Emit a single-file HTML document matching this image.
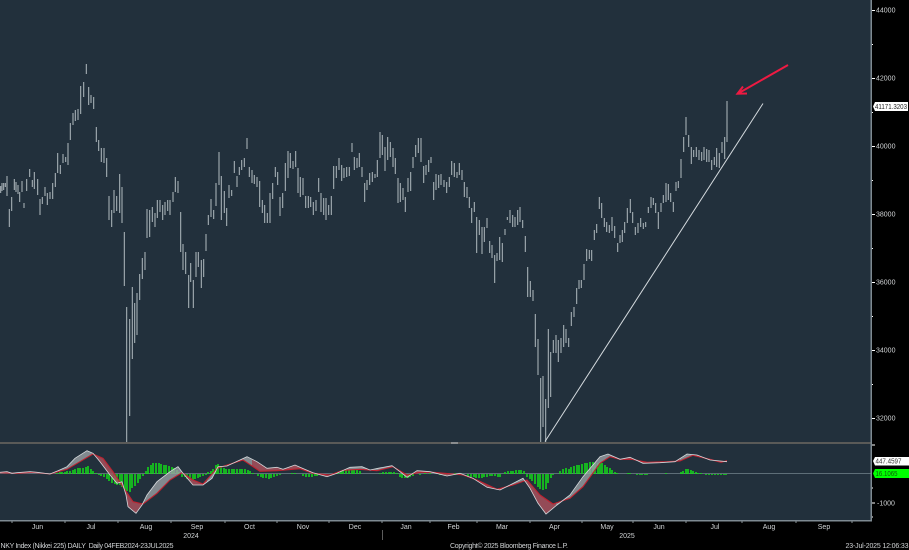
<!DOCTYPE html>
<html><head><meta charset="utf-8"><style>
html,body{margin:0;padding:0;background:#000;width:909px;height:550px;overflow:hidden}
svg{display:block}
text{font-family:"Liberation Sans",sans-serif;font-size:7px;fill:#d0d3d5}
</style></head><body>
<svg width="909" height="550" viewBox="0 0 909 550" xmlns="http://www.w3.org/2000/svg">
<defs>
<clipPath id="g"><path d="M0 440H95V520H0ZM143 440H182V520H143ZM207 440H252V520H207ZM335 440H395V520H335ZM505 440H524V520H505ZM556 440H625V520H556ZM680 440H698V520H680Z"/></clipPath>
<clipPath id="r"><path d="M95 440H143V520H95ZM182 440H207V520H182ZM252 440H335V520H252ZM395 440H505V520H395ZM524 440H556V520H524ZM625 440H680V520H625ZM698 440H730V520H698Z"/></clipPath>
</defs>
<rect width="909" height="550" fill="#000"/>
<rect x="0" y="0" width="871" height="521" fill="#22303c"/>
<!-- price bars -->
<path fill="none" stroke="#b2bbc0" stroke-width="1" d="M0.7 186V193M2 183V191M3.7 183V190M5.3 183V187M7 176V196M9.3 209V227M11.7 197V211M14.3 179V190M16 182V192M18 185V194M19.7 192V202M22 181V192M24 203V208M26.7 179V191M29.7 169V177M32.3 180V187M34.3 172V189M37.7 179V195M40 199V215M42.3 197V204M45 187V196M47.3 193V205M50 192V199M52.7 183V199M55.3 173V187M57.7 153V173M60.3 165V174M63 154V163M65.7 157V162M68 143V165M70.3 123V140M73 113V125M75.3 110V121M78 109V120M80.7 86V114M83.7 82V97M86.3 64V74M88.7 87V105M91 95V103M93.7 97V109M96.3 127V142M98.7 140V151M101.3 148V162M104 148V163M106.7 158V177M109 196V220M111.7 210V227M114 190V213M116.7 196V211M119.7 174V213M122 187V223M124.3 232V286M126.7 307V442M129.7 319V416M132.3 287V359M134.7 303V343M137 293V335M139.7 274V300M142.3 258V279M145 252V270M147 209V238M149.7 210V237M152.3 207V222M155 213V227M157.3 200V218M160 200V212M162.7 205V220M165 202V215M167.7 200V211M170 200V215M173 192V202M175.3 177V192M178 181V193M180.7 212V252M183 244V270M185.7 252V274M188.7 275V308M190.7 263V282M193.3 280V308M196 252V277M198.3 252V267M201.3 260V288M203.7 259V277M206 234V251M208.3 215V225M211 199V217M213.7 210V219M216 183V206M219 152V185M221.3 176V220M224.3 191V213M226.7 208V226M229 185V198M231.7 190V196M234.3 161V173M237 176V187M239.3 167V175M241.7 160V170M244.3 158V167M247 138V149M249.3 167V177M252 170V183M254.3 175V184M257 177V187M259.7 181V207M262.3 200V213M264.7 205V223M267.3 213V223M270 193V223M272.7 183V199M275.3 167V177M277.7 172V185M280 197V216M282.7 193V208M285.3 163V191M288 151V178M290.3 153V168M293 161V169M295.7 151V167M298 168V193M300.3 177V197M303 178V195M305.7 196V208M308.3 196V208M310.7 197V207M313.3 202V215M316 200V211M318.7 178V192M321 193V212M323.7 198V215M326 198V220M328.7 205V215M331.3 196V215M333.7 166V189M336.3 166V178M339 158V170M341.7 165V181M344 168V178M346.7 167V177M349.3 167V176M352 143V152M354.3 157V170M357 158V168M359.3 153V167M362 167V177M364.7 183V202M367 180V190M369.7 173V185M372.3 172V182M375 174V178M377.3 160V177M380 132V158M382.3 135V155M385 147V171M387.7 137V160M390.3 142V157M393 148V167M395.3 158V174M398 178V203M400.3 183V202M403 188V200M405.3 197V212M408 178V192M410.7 172V191M413 157V168M415.7 145V157M418.3 138V153M421 138V162M423.7 166V183M426 165V175M428.7 160V172M431 157V163M433.7 182V200M436 174V190M438.7 175V188M441 174V185M444 180V187M446.7 182V193M449.3 177V187M451.7 161V175M454.3 163V177M457 172V178M459.3 163V175M462 170V180M464.3 182V197M467 187V198M469.3 197V208M471.7 208V223M474.3 202V212M476.7 217V253M479.3 220V235M482 227V254M484.3 227V242M487 218V228M489.7 241V253M492 245V258M494.7 255V283M497 253V261M499.7 237V260M502.3 243V262M505 229V235M507.3 217V220M510 210V223M512.7 215V227M515 217V227M517.7 210V225M520 207V222M522.7 220V228M525.3 236V252M527.7 267V297M530.3 281V297M533 290V301M535.3 314V347M538 339V375M540.7 378V442M543 376V427M545.7 399V442M548.3 329V408M550.7 352V397M553.3 340V353M556 335V353M558.3 340V362M561 338V353M563.7 325V347M566 329V343M568.7 338V347M571.3 312V326M574 307V317M576.7 288V304M579 280V289M581.3 280V288M584 264V280M586.7 249V261M589.3 250V259M591.7 250V261M594.3 230V240M596.7 224V233M599.3 197V209M601.7 203V218M604.3 218V227M606.7 222V232M609.3 225V233M612 217V231M614.7 226V238M617.7 243V252M620 235V243M622.3 230V242M624.7 222V233M627.3 208V223M630.3 199V213M632.7 212V223M635.3 227V235M638 223V233M640.7 218V227M643.3 223V229M645.7 222V227M648.3 207V213M651 197V208M653.3 198V205M655.7 203V213M658.3 212V229M661 203V212M663.3 195V203M666 183V202M668.3 184V200M670.7 193V202M673.3 202V212M676 182V191M678.3 181V188M681 159V178M683.7 137V152M686 117V135M688.7 135V147M691.3 147V164M693.7 150V157M696.3 147V157M699 150V160M701.7 152V161M704 147V160M706.7 149V162M709 150V162M711.7 160V170M714.3 157V165M716.7 148V167M719.3 153V168M722 142V153M724.7 137V159M727 101V142"/>
<!-- trendline -->
<path d="M545 441.5L763 103.5" stroke="#d4dade" stroke-width="1" fill="none"/>
<!-- arrow -->
<path d="M788 65L738 93.5M743 86.5L737.500 93.700L747 93.500" stroke="#ee1a42" stroke-width="2" fill="none"/>
<!-- separator -->
<rect x="0" y="442" width="871" height="2" fill="#5a5a58"/>
<rect x="451" y="442" width="7" height="2" fill="#8a8d8f"/>
<!-- zero line -->
<rect x="0" y="473" width="871" height="1" fill="#5e6e78"/>
<!-- histogram -->
<path stroke="#12df16" stroke-width="1.5" fill="none" d="M57 474V473M60 474V472M62 474V472M65 474V472M67 474V471M70 474V471M73 474V470M75 474V469M78 474V468M80 474V468M83 474V468M86 474V467M88 474V466M91 474V469M93 474V471M96 474V473M99 474V475M101 474V476M104 474V477M107 474V479M109 474V481M112 474V483M115 474V484M117 474V485M120 474V485M122 474V487M125 474V490M127 474V491M130 474V492M132 474V488M135 474V486M138 474V483M140 474V479M143 474V476M146 474V471M148 474V467M151 474V465M153 474V463M156 474V463M159 474V463M161 474V464M164 474V465M166 474V465M169 474V466M172 474V467M174 474V468M177 474V470M179 474V472M182 474V477M185 474V477M187 474V479M190 474V480M193 474V480M195 474V479M198 474V478M200 474V477M203 474V476M206 474V475M208 474V472M211 474V471M213 474V469M216 474V465M218 474V464M221 474V466M224 474V468M226 474V469M229 474V469M232 474V469M234 474V469M237 474V469M240 474V469M242 474V469M245 474V469M248 474V470M250 474V471M253 474V473M258 474V476M261 474V477M263 474V478M266 474V478M269 474V479M271 474V478M274 474V477M277 474V476M280 474V475M292 474V473M295 474V473M303 474V476M306 474V477M309 474V477M312 474V477M315 474V476M317 474V476M335 474V473M338 474V472M341 474V471M343 474V471M346 474V470M349 474V470M352 474V470M354 474V469M357 474V470M360 474V471M380 474V473M383 474V472M386 474V472M389 474V472M391 474V472M394 474V472M397 474V473M400 474V477M402 474V478M405 474V478M408 474V478M410 474V477M413 474V476M420 474V475M425 474V473M430 474V473M440 474V475M445 474V475M455 474V473M460 474V473M468 474V476M471 474V477M474 474V477M476 474V478M479 474V478M482 474V478M484 474V477M487 474V477M490 474V476M492 474V476M495 474V476M498 474V477M500 474V477M505 474V472M508 474V471M511 474V471M513 474V471M516 474V470M519 474V470M521 474V470M524 474V471M527 474V477M530 474V479M532 474V481M535 474V484M538 474V487M540 474V489M543 474V490M546 474V489M548 474V483M551 474V478M553 474V475M560 474V471M563 474V469M566 474V468M569 474V469M571 474V467M574 474V466M577 474V465M579 474V465M582 474V464M585 474V463M587 474V463M590 474V462M593 474V462M595 474V463M598 474V463M600 474V462M602 474V463M605 474V465M607 474V467M610 474V468M612 474V470M615 474V472M617 474V473M628 474V473M630 474V473M637 474V475M640 474V475M642 474V475M645 474V475M647 474V475M666 474V473M681 474V472M683 474V471M686 474V469M688 474V469M691 474V470M693 474V471M696 474V472M698 474V473M701 474V473M706 474V475M709 474V475M712 474V475M715 474V475M718 474V475M721 474V475M724 474V475M726 474V475"/>
<!-- MACD fills -->
<path clip-path="url(#g)" fill="#9aa0a4" fill-opacity=".8" d="M0 472.3L7 471.7L12 473.3L17 472.7L30 471.7L37 472.3L50 474L58 470.7L67 466.7L75 458.3L87 450.7L93 453.3L100 461.7L110 475L117 483.3L122 481.7L126 495L128 506.7L136 513.3L142 505L147 495L157 481.7L170 471.7L178 466.7L183 473.3L193 485L203 485L212 478.3L218 466.7L227 466L247 456.7L257 461.7L267 468.3L277 467.3L283 469.3L295 465L300 467.3L313 472.7L327 476.7L337 473.3L350 467.3L362 466.7L370 470L378 468.3L392 465.7L400 471.7L407 477.3L417 470.7L430 471.7L447 476L460 473.3L473 478.3L487 487.3L500 490L510 485L523 478.3L530 488.3L538 503.3L546 514L557 505L570 495L583 476.7L600 456.7L608 454L620 459.3L630 457.3L643 463.3L660 462.7L675 461.7L687 454L697 455L710 460L727 461.7L727 460.7L721 462.3L710 459.3L693 455.3L680 461L667 461.7L647 462.3L632 459.3L620 459.3L610 456.7L600 463.3L583 486.7L570 498.3L553 504L540 495L527 480L513 485L497 489.3L477 480L463 475L453 474L433 472.3L420 472.3L407 475L393 466.7L377 470.7L360 469.3L343 470.3L330 475L313 473.3L300 468.7L277 470.7L260 471.3L243 460L217 468.3L203 484L193 480L182 472.7L170 480L157 493.3L143 504L133 501.7L123 486.7L113 471.7L103 458.3L93 454L80 461.7L67 469.3L50 474L33 472.3L17 473.3L0 472.7Z"/>
<path clip-path="url(#r)" fill="#a8505c" fill-opacity=".85" d="M0 472.3L7 471.7L12 473.3L17 472.7L30 471.7L37 472.3L50 474L58 470.7L67 466.7L75 458.3L87 450.7L93 453.3L100 461.7L110 475L117 483.3L122 481.7L126 495L128 506.7L136 513.3L142 505L147 495L157 481.7L170 471.7L178 466.7L183 473.3L193 485L203 485L212 478.3L218 466.7L227 466L247 456.7L257 461.7L267 468.3L277 467.3L283 469.3L295 465L300 467.3L313 472.7L327 476.7L337 473.3L350 467.3L362 466.7L370 470L378 468.3L392 465.7L400 471.7L407 477.3L417 470.7L430 471.7L447 476L460 473.3L473 478.3L487 487.3L500 490L510 485L523 478.3L530 488.3L538 503.3L546 514L557 505L570 495L583 476.7L600 456.7L608 454L620 459.3L630 457.3L643 463.3L660 462.7L675 461.7L687 454L697 455L710 460L727 461.7L727 460.7L721 462.3L710 459.3L693 455.3L680 461L667 461.7L647 462.3L632 459.3L620 459.3L610 456.7L600 463.3L583 486.7L570 498.3L553 504L540 495L527 480L513 485L497 489.3L477 480L463 475L453 474L433 472.3L420 472.3L407 475L393 466.7L377 470.7L360 469.3L343 470.3L330 475L313 473.3L300 468.7L277 470.7L260 471.3L243 460L217 468.3L203 484L193 480L182 472.7L170 480L157 493.3L143 504L133 501.7L123 486.7L113 471.7L103 458.3L93 454L80 461.7L67 469.3L50 474L33 472.3L17 473.3L0 472.7Z"/>
<!-- MACD lines -->
<path fill="none" stroke="#c0212f" stroke-width="1.1" d="M0 472.7L17 473.3L33 472.3L50 474L67 469.3L80 461.7L93 454L103 458.3L113 471.7L123 486.7L133 501.7L143 504L157 493.3L170 480L182 472.7L193 480L203 484L217 468.3L243 460L260 471.3L277 470.7L300 468.7L313 473.3L330 475L343 470.3L360 469.3L377 470.7L393 466.7L407 475L420 472.3L433 472.3L453 474L463 475L477 480L497 489.3L513 485L527 480L540 495L553 504L570 498.3L583 486.7L600 463.3L610 456.7L620 459.3L632 459.3L647 462.3L667 461.7L680 461L693 455.3L710 459.3L721 462.3L727 460.7"/>
<path fill="none" stroke="#d5d9dc" stroke-width=".8" d="M0 472.3L7 471.7L12 473.3L17 472.7L30 471.7L37 472.3L50 474L58 470.7L67 466.7L75 458.3L87 450.7L93 453.3L100 461.7L110 475L117 483.3L122 481.7L126 495L128 506.7L136 513.3L142 505L147 495L157 481.7L170 471.7L178 466.7L183 473.3L193 485L203 485L212 478.3L218 466.7L227 466L247 456.7L257 461.7L267 468.3L277 467.3L283 469.3L295 465L300 467.3L313 472.7L327 476.7L337 473.3L350 467.3L362 466.7L370 470L378 468.3L392 465.7L400 471.7L407 477.3L417 470.7L430 471.7L447 476L460 473.3L473 478.3L487 487.3L500 490L510 485L523 478.3L530 488.3L538 503.3L546 514L557 505L570 495L583 476.7L600 456.7L608 454L620 459.3L630 457.3L643 463.3L660 462.7L675 461.7L687 454L697 455L710 460L727 461.7"/>
<!-- frame -->
<rect x="870.5" y="0" width="1.5" height="521" fill="#7e8a92"/>
<rect x="0" y="520" width="872" height="1.5" fill="#7e8a92"/>
<!-- x ticks -->
<path stroke="#8a9298" stroke-width="1" fill="none" d="M12 521V523M65 521V523M118 521V523M171 521V523M225 521V523M277 521V523M329 521V523M382 521V523M430 521V523M477 521V523M530 521V523M582 521V523M633 521V523M686 521V523M742 521V523M796 521V523M852 521V523"/>
<path stroke="#5c5c5c" stroke-width="1" fill="none" d="M382.5 530V540"/>
<!-- y ticks -->
<path stroke="#fff" stroke-width="1" fill="none" d="M872 10.5H875M872 78.5H875M872 146.5H875M872 214.5H875M872 282.5H875M872 350.5H875M872 418.5H875M872 44.5H873M872 112.5H873M872 180.5H873M872 248.5H873M872 316.5H873M872 384.5H873M872 445H875M872 488H873M872 503H875M872 517H873"/>
<text x="876" y="12.5">44000</text>
<text x="876" y="80.5">42000</text>
<text x="876" y="148.5">40000</text>
<text x="876" y="216.5">38000</text>
<text x="876" y="284.5">36000</text>
<text x="876" y="352.5">34000</text>
<text x="876" y="420.5">32000</text>
<text x="877" y="505.5">-1000</text>
<!-- value labels -->
<path d="M873 106.5L875 102H908V111H875Z" fill="#fff"/>
<text x="875" y="109" textLength="32" lengthAdjust="spacingAndGlyphs" style="fill:#222">41171.3203</text>
<path d="M873 461L875 457H909V465.5H875Z" fill="#fff"/>
<text x="875.5" y="463.5" textLength="26" lengthAdjust="spacingAndGlyphs" style="fill:#333">447.4597</text>
<path d="M873 473.5L875 469H909V478H875Z" fill="#0f0"/>
<text x="875.5" y="476" textLength="22" lengthAdjust="spacingAndGlyphs" style="fill:#0a5a0a">16.1065</text>
<!-- month labels -->
<text x="37.5" y="529" text-anchor="middle">Jun</text>
<text x="91" y="529" text-anchor="middle">Jul</text>
<text x="146" y="529" text-anchor="middle">Aug</text>
<text x="197" y="529" text-anchor="middle">Sep</text>
<text x="249.5" y="529" text-anchor="middle">Oct</text>
<text x="303" y="529" text-anchor="middle">Nov</text>
<text x="355" y="529" text-anchor="middle">Dec</text>
<text x="406" y="529" text-anchor="middle">Jan</text>
<text x="453.5" y="529" text-anchor="middle">Feb</text>
<text x="502" y="529" text-anchor="middle">Mar</text>
<text x="554.5" y="529" text-anchor="middle">Apr</text>
<text x="607" y="529" text-anchor="middle">May</text>
<text x="659" y="529" text-anchor="middle">Jun</text>
<text x="715" y="529" text-anchor="middle">Jul</text>
<text x="769" y="529" text-anchor="middle">Aug</text>
<text x="824" y="529" text-anchor="middle">Sep</text>
<text x="191" y="538" text-anchor="middle">2024</text>
<text x="627" y="538" text-anchor="middle">2025</text>
<text x="0.5" y="548" textLength="173" lengthAdjust="spacing" xml:space="preserve">NKY Index (Nikkei 225) DAILY  Daily 04FEB2024-23JUL2025</text>
<text x="450" y="548" textLength="118" lengthAdjust="spacing">Copyright© 2025 Bloomberg Finance L.P.</text>
<text x="845.5" y="548" textLength="63" lengthAdjust="spacing" xml:space="preserve">23-Jul-2025 12:06:33</text>
</svg>
</body></html>
